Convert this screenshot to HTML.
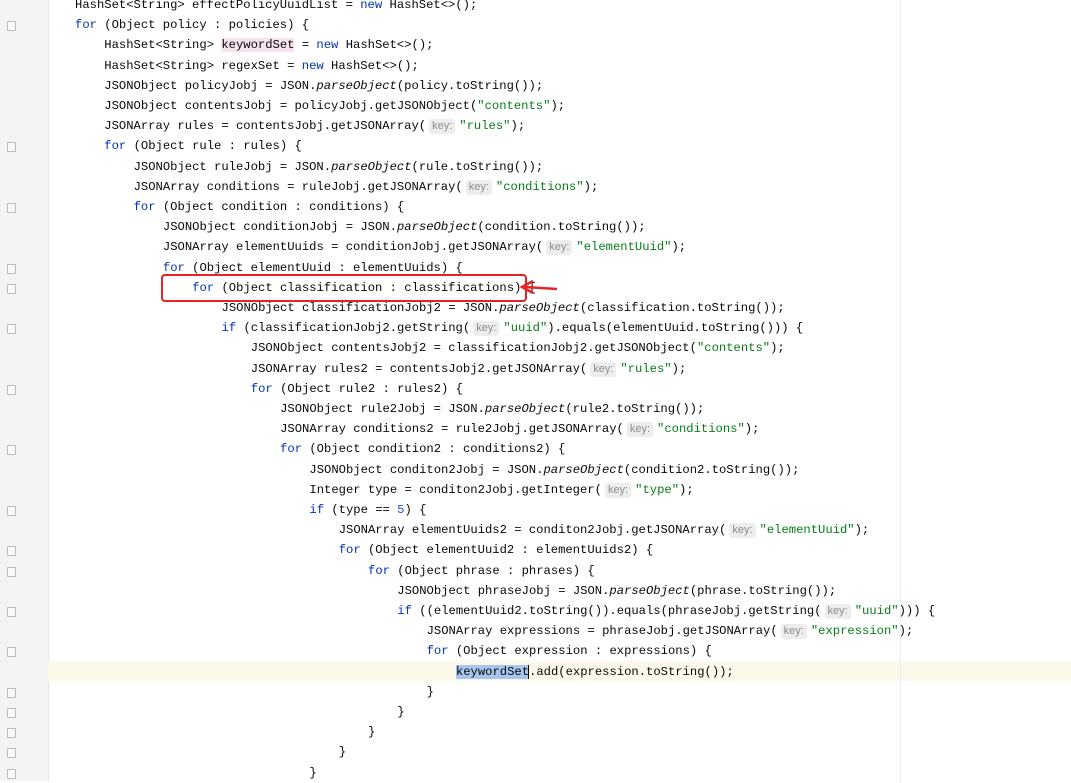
<!DOCTYPE html>
<html><head><meta charset="utf-8"><style>
html,body{margin:0;padding:0;width:1071px;height:781px;overflow:hidden;background:#fff;}
.g{position:absolute;left:0;top:0;width:48px;height:781px;background:#f4f4f4;border-right:1px solid #e6e6e6;}
.l{position:absolute;left:0;height:20px;line-height:20px;white-space:pre;font-family:"Liberation Mono",monospace;font-size:12.2px;color:#080808;}
.k{color:#0033b3}.s{color:#067d17}.n{color:#1750eb}.i{font-style:italic}
.h{display:inline-block;font-family:"Liberation Sans",sans-serif;font-size:11px;color:#8c8c8c;background:#ededed;border-radius:3px;padding:0 3px;line-height:15px;margin:0 4px 0 3px;}
.cur{position:absolute;left:48px;top:661px;width:1023px;height:20px;background:#fdf9ea;}
.f{position:absolute;left:7px;width:7px;height:8px;border:1px solid #bbb;border-radius:1px;background:#fafafa;}
</style></head><body>
<div class="g"></div>
<div class="cur"></div>
<div style="position:absolute;left:900px;top:0;width:1px;height:781px;background:#eee"></div>
<div id="c"></div>
<div style="position:absolute;left:161px;top:274px;width:362px;height:24px;border:2px solid #e52525;border-radius:4px;"></div>
<svg style="position:absolute;left:515px;top:278px" width="45" height="20"><path d="M42 11 L10 9" stroke="#e52525" stroke-width="2.5" fill="none"/><path d="M18 3 L7 9 L18 15" stroke="#e52525" stroke-width="2.5" fill="none"/></svg>
<script>
var K='<span class="h">key:</span>';
var L=[
[0,'HashSet&lt;String&gt; effectPolicyUuidList = <span class="k">new</span> HashSet&lt;&gt;();'],
[0,'<span class="k">for</span> (Object policy : policies) {'],
[1,'HashSet&lt;String&gt; <span style="background:#f7e3ee">keywordSet</span> = <span class="k">new</span> HashSet&lt;&gt;();'],
[1,'HashSet&lt;String&gt; regexSet = <span class="k">new</span> HashSet&lt;&gt;();'],
[1,'JSONObject policyJobj = JSON.<span class="i">parseObject</span>(policy.toString());'],
[1,'JSONObject contentsJobj = policyJobj.getJSONObject(<span class="s">"contents"</span>);'],
[1,'JSONArray rules = contentsJobj.getJSONArray('+K+'<span class="s">"rules"</span>);'],
[1,'<span class="k">for</span> (Object rule : rules) {'],
[2,'JSONObject ruleJobj = JSON.<span class="i">parseObject</span>(rule.toString());'],
[2,'JSONArray conditions = ruleJobj.getJSONArray('+K+'<span class="s">"conditions"</span>);'],
[2,'<span class="k">for</span> (Object condition : conditions) {'],
[3,'JSONObject conditionJobj = JSON.<span class="i">parseObject</span>(condition.toString());'],
[3,'JSONArray elementUuids = conditionJobj.getJSONArray('+K+'<span class="s">"elementUuid"</span>);'],
[3,'<span class="k">for</span> (Object elementUuid : elementUuids) {'],
[4,'<span class="k">for</span> (Object classification : classifications) {'],
[5,'JSONObject classificationJobj2 = JSON.<span class="i">parseObject</span>(classification.toString());'],
[5,'<span class="k">if</span> (classificationJobj2.getString('+K+'<span class="s">"uuid"</span>).equals(elementUuid.toString())) {'],
[6,'JSONObject contentsJobj2 = classificationJobj2.getJSONObject(<span class="s">"contents"</span>);'],
[6,'JSONArray rules2 = contentsJobj2.getJSONArray('+K+'<span class="s">"rules"</span>);'],
[6,'<span class="k">for</span> (Object rule2 : rules2) {'],
[7,'JSONObject rule2Jobj = JSON.<span class="i">parseObject</span>(rule2.toString());'],
[7,'JSONArray conditions2 = rule2Jobj.getJSONArray('+K+'<span class="s">"conditions"</span>);'],
[7,'<span class="k">for</span> (Object condition2 : conditions2) {'],
[8,'JSONObject conditon2Jobj = JSON.<span class="i">parseObject</span>(condition2.toString());'],
[8,'Integer type = conditon2Jobj.getInteger('+K+'<span class="s">"type"</span>);'],
[8,'<span class="k">if</span> (type == <span class="n">5</span>) {'],
[9,'JSONArray elementUuids2 = conditon2Jobj.getJSONArray('+K+'<span class="s">"elementUuid"</span>);'],
[9,'<span class="k">for</span> (Object elementUuid2 : elementUuids2) {'],
[10,'<span class="k">for</span> (Object phrase : phrases) {'],
[11,'JSONObject phraseJobj = JSON.<span class="i">parseObject</span>(phrase.toString());'],
[11,'<span class="k">if</span> ((elementUuid2.toString()).equals(phraseJobj.getString('+K+'<span class="s">"uuid"</span>))) {'],
[12,'JSONArray expressions = phraseJobj.getJSONArray('+K+'<span class="s">"expression"</span>);'],
[12,'<span class="k">for</span> (Object expression : expressions) {'],
[13,'<span style="background:#a6c6f0">keywordSet</span><span style="border-left:1px solid #000;margin-left:-1px"></span>.add(expression.toString());'],
[12,'}'],[11,'}'],[10,'}'],[9,'}'],[8,'}']];
var h='';
for(var j=0;j<L.length;j++){var t=-5+j*20.2;
h+='<div class="l" style="top:'+t+'px;left:'+(75+L[j][0]*29.3)+'px">'+L[j][1]+'</div>';
if(/\{$/.test(L[j][1])||L[j][1]=='}')h+='<div class="f" style="top:'+(t+6)+'px"></div>';}
document.getElementById('c').innerHTML=h;
</script>
</body></html>
